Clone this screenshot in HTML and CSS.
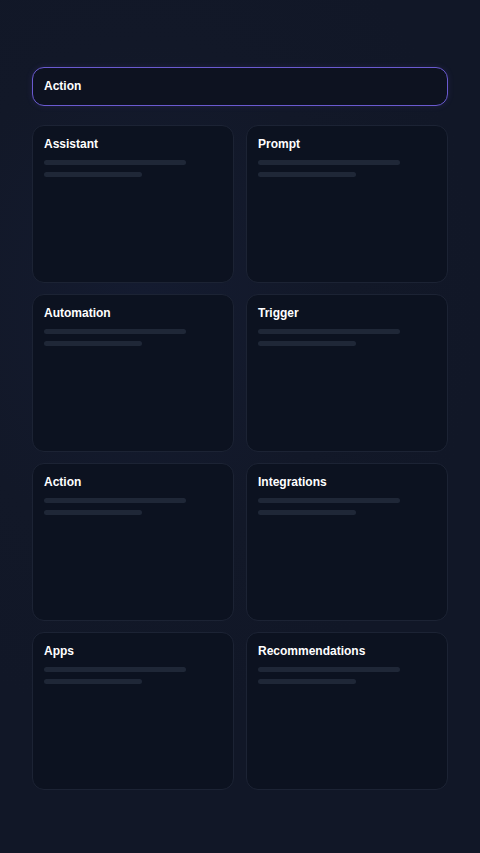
FILE: index.html
```html
<!DOCTYPE html>
<html>
<head>
<meta charset="utf-8">
<link rel="stylesheet" href="styles.css">
</head>
<body>
<div class="page">
  <div class="searchbar">Action</div>
  <div class="grid">
    <div class="card"><div class="title">Assistant</div><div class="bar long"></div><div class="bar short"></div></div>
    <div class="card"><div class="title">Prompt</div><div class="bar long"></div><div class="bar short"></div></div>
    <div class="card"><div class="title">Automation</div><div class="bar long"></div><div class="bar short"></div></div>
    <div class="card"><div class="title">Trigger</div><div class="bar long"></div><div class="bar short"></div></div>
    <div class="card"><div class="title">Action</div><div class="bar long"></div><div class="bar short"></div></div>
    <div class="card"><div class="title">Integrations</div><div class="bar long"></div><div class="bar short"></div></div>
    <div class="card"><div class="title">Apps</div><div class="bar long"></div><div class="bar short"></div></div>
    <div class="card"><div class="title">Recommendations</div><div class="bar long"></div><div class="bar short"></div></div>
  </div>
</div>
</body>
</html>
```
FILE: styles.css
```css
html, body {
  margin: 0;
  padding: 0;
}
body {
  width: 480px;
  height: 853px;
  background: radial-gradient(ellipse 70% 50% at 30% 35%, #141b30 0%, #121828 60%, #111727 100%);
  font-family: "Liberation Sans", Arial, sans-serif;
  color: #ffffff;
  overflow: hidden;
}
.page {
  padding: 67px 32px 0 32px;
}
.searchbar {
  box-sizing: border-box;
  height: 39px;
  border: 1px solid #6a5ad0;
  border-radius: 12px;
  background: #0d1220;
  font-weight: bold;
  font-size: 12px;
  line-height: 37px;
  padding-left: 11px;
  box-shadow: 0 0 6px rgba(110, 90, 220, 0.15);
}
.grid {
  margin-top: 19px;
  display: grid;
  grid-template-columns: 1fr 1fr;
  column-gap: 12px;
  row-gap: 11px;
}
.card {
  height: 158px;
  box-sizing: border-box;
  border: 1px solid #1c2334;
  border-radius: 12px;
  background: #0c1220;
  padding: 11px 11px 0 11px;
}
.title {
  font-weight: bold;
  font-size: 12px;
  line-height: 14px;
  height: 14px;
  margin-bottom: 9px;
}
.bar {
  height: 5px;
  border-radius: 3px;
  background: #1f2737;
}
.long {
  width: 142px;
}
.short {
  width: 98px;
  margin-top: 7px;
}
```
